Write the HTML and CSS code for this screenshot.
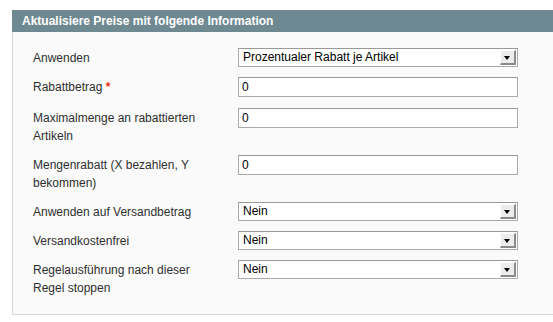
FILE: index.html
```html
<!DOCTYPE html>
<html lang="de">
<head>
  <meta charset="UTF-8" />
  <title>Aktionen</title>
  <link rel="stylesheet" href="styles.css">
</head>
<body>

  <div class="entry-edit">
    <div class="entry-head">Aktualisiere Preise mit folgende Information</div>

    <div class="fieldset">
      <div class="field">
        <label class="field-label">Anwenden</label>
        <div class="field-value">
          <div class="select">
            <span class="select-text">Prozentualer Rabatt je Artikel</span>
            <span class="select-arrow"></span>
          </div>
        </div>
      </div>

      <div class="field field-text">
        <label class="field-label">Rabattbetrag <span class="required">*</span></label>
        <div class="field-value">
          <input class="input-text" type="text" value="0" />
        </div>
      </div>

      <div class="field">
        <label class="field-label">Maximalmenge an rabattierten Artikeln</label>
        <div class="field-value">
          <input class="input-text" type="text" value="0" />
        </div>
      </div>

      <div class="field">
        <label class="field-label">Mengenrabatt (X bezahlen, Y bekommen)</label>
        <div class="field-value">
          <input class="input-text" type="text" value="0" />
        </div>
      </div>

      <div class="field">
        <label class="field-label">Anwenden auf Versandbetrag</label>
        <div class="field-value">
          <div class="select">
            <span class="select-text">Nein</span>
            <span class="select-arrow"></span>
          </div>
        </div>
      </div>

      <div class="field">
        <label class="field-label">Versandkostenfrei</label>
        <div class="field-value">
          <div class="select">
            <span class="select-text">Nein</span>
            <span class="select-arrow"></span>
          </div>
        </div>
      </div>

      <div class="field">
        <label class="field-label">Regelausführung nach dieser Regel stoppen</label>
        <div class="field-value">
          <div class="select">
            <span class="select-text">Nein</span>
            <span class="select-arrow"></span>
          </div>
        </div>
      </div>
    </div>
  </div>

</body>
</html>
```

FILE: styles.css
```css
html,
body {
  overflow: hidden;
}

body {
  font-family: "Liberation Sans", Arial, Helvetica, sans-serif;
  font-size: 12px;
  margin: 10px 0 0 12px;
  background: #fff;
  color: #2f2f2f;
}

.entry-edit {
  width: 560px;
}

.entry-head {
  background: #6f8992;
  color: #fff;
  font-weight: bold;
  height: 22px;
  line-height: 22px;
  padding-left: 10px;
}

.fieldset {
  background: #fafafa;
  border: 1px solid #d6d6d6;
  border-top: 0;
  padding: 16px 0 17px 20px;
}

.field {
  display: flex;
  align-items: flex-start;
  margin-bottom: 10px;
}

.field-text {
  margin-bottom: 11px;
}

.field:last-child {
  margin-bottom: 0;
}

.field-label {
  width: 180px;
  margin-right: 25px;
  line-height: 18px;
  padding-top: 1px;
}

.required {
  color: #eb340a;
  font-weight: bold;
}

.field-value {
  width: 280px;
}

.input-text {
  box-sizing: border-box;
  width: 280px;
  height: 20px;
  margin: 0;
  padding: 0 3px;
  border: 1px solid #aaa;
  border-top-color: #999;
  background: #fff;
  font-family: "Liberation Sans", Arial, Helvetica, sans-serif;
  font-size: 12px;
  color: #000;
}

.select {
  position: relative;
  box-sizing: border-box;
  width: 280px;
  height: 19px;
  border: 1px solid #aaa;
  border-top-color: #999;
  background: #fff;
  color: #000;
}

.select-text {
  display: block;
  line-height: 17px;
  padding-left: 4px;
}

.select-arrow {
  position: absolute;
  top: 1px;
  right: 1px;
  width: 13px;
  height: 12px;
  background: #ececec;
  border-left: 1px solid #fff;
  border-top: 1px solid #fff;
  border-right: 2px solid #8a8a8a;
  border-bottom: 2px solid #8a8a8a;
}

.select-arrow::after {
  content: "";
  position: absolute;
  left: 3px;
  top: 5px;
  border-left: 3.5px solid transparent;
  border-right: 3.5px solid transparent;
  border-top: 4px solid #000;
}
```
